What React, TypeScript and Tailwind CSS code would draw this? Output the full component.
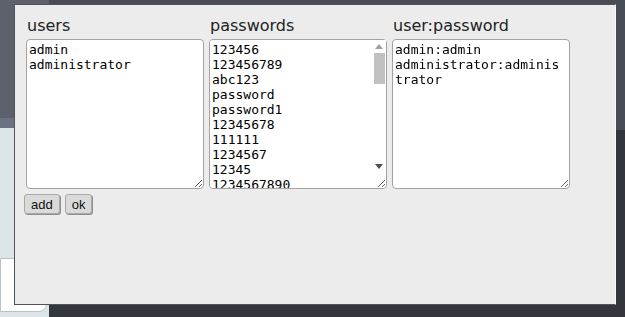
const passwords = [
    '123456', '123456789', 'abc123', 'password', 'password1', '12345678', '111111', '1234567', '12345', '1234567890',
    '123123', '000000', 'iloveyou', '1234', '1q2w3e4r5t', 'qwertyuiop', '123', 'monkey', 'dragon', '123456a',
    '654321', '123321', '666666', '1qaz2wsx', 'myspace1', '121212', 'homelesspa', '123qwe', 'a123456', '123abc',
    '1q2w3e4r', 'qwe123', '7777777', 'qwerty123', 'target123', 'tinkle', '987654321', 'qwerty', 'zxcvbnm', 'gwerty',
    'football', 'baseball', 'welcome', 'sunshine', 'princess', 'letmein', 'shadow', 'master', 'superman', 'trustno1',
]

const monoCls = "resize block h-[150px] w-[178px] rounded-[4px] border border-[#a3a3a3] bg-white pt-[2px] pb-[2px] pl-[2px] pr-[4px] font-['DejaVu_Sans_Mono',monospace] text-[13px] leading-[15px] text-black outline-none"

// the old-style scrollbar drawn over the right edge of the passwords box
const Scrollbar = () => (
    <div className="pointer-events-none absolute bottom-[16px] right-[1px] top-[1px] flex w-[14px] flex-col items-center bg-white">
        <svg width="8" height="5" viewBox="0 0 8 5" className="mt-[4px]">
            <path d="M0 5 L4 0 L8 5 Z" fill="#a0a0a0" />
        </svg>
        <div className="mt-[4px] h-[31px] w-[11px] bg-[#c1c1c1]" />
        <div className="flex-1" />
        <svg width="8" height="5" viewBox="0 0 8 5" className="mb-[4px]">
            <path d="M0 0 L8 0 L4 5 Z" fill="#505050" />
        </svg>
    </div>
)

const Column = ({ label, value, wrap, scroll }: { label: string; value: string; wrap?: boolean; scroll?: boolean }) => (
    <div className="flex flex-col">
        <div className="mb-[4px] h-[19px] pl-[1px] text-[16px] leading-[19px] text-[#222]">{label}</div>
        <div className="relative">
            <textarea
                className={monoCls + (wrap ? '' : ' whitespace-pre')}
                defaultValue={value}
                spellCheck={false}
            />
            {scroll && <Scrollbar />}
        </div>
    </div>
)

const Button = ({ children }: { children: string }) => (
    <button className="h-[20px] rounded-[3px] border border-[#a8a8a8] bg-[#dadada] px-[6px] font-['Liberation_Sans',Arial,sans-serif] text-[13px] leading-[17px] text-[#111] shadow-[1px_1px_0_#8f8f8f]">
        {children}
    </button>
)

const App = () => {
    return (
        <div className="relative h-[317px] w-[625px] overflow-hidden bg-[#363941] font-['DejaVu_Sans',sans-serif]">
            {/* page behind the dialog */}
            <div className="flex h-full">
                <div className="flex w-[49px] flex-col">
                    <div className="h-[118px] bg-[#5c616c]" />
                    <div className="h-[10px] bg-[#6c7380]" />
                    <div className="flex flex-1 flex-col bg-[#dce6e8] pt-[130px]">
                        <div className="h-[54px] w-[47px] rounded-r-[8px] border border-[#b9c3c6] bg-white" />
                    </div>
                </div>
                <div className="flex flex-1 flex-col">
                    <div className="h-[130px] bg-[#474c56]" />
                    <div className="flex-1 bg-[#33363d]" />
                </div>
            </div>

            {/* dialog */}
            <div className="absolute left-[14px] top-[4px] h-[301px] w-[602px] border border-[#4e535d] border-r-[#fafafa] bg-[#ececec] pl-[11px] pt-[11px]">
                <div className="flex gap-[5px]">
                    <Column label="users" value={'admin\nadministrator'} />
                    <Column label="passwords" value={passwords.join('\n')} scroll />
                    <Column label="user:password" value={'admin:admin\nadministrator:administrator'} wrap />
                </div>
                <div className="-ml-[2px] mt-[5px] flex gap-[5px]">
                    <Button>add</Button>
                    <Button>ok</Button>
                </div>
            </div>
        </div>
    )
}

export default App
